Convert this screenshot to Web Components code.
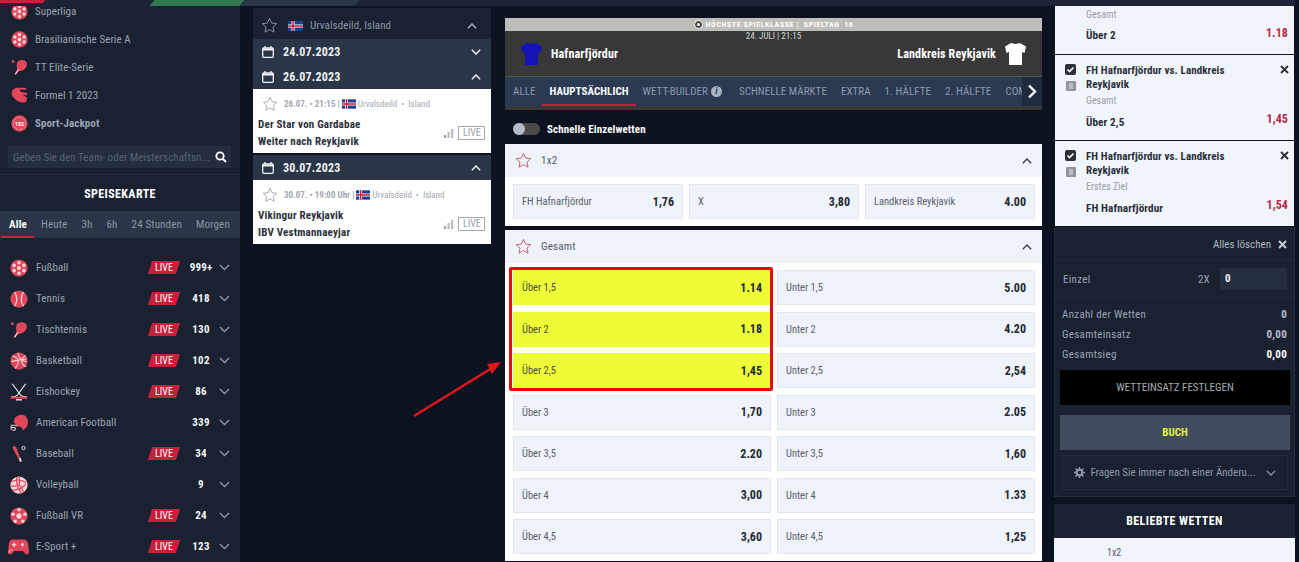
<!DOCTYPE html>
<html lang="de">
<head>
<meta charset="utf-8">
<title>Wetten</title>
<style>
  html, body { margin: 0; height: 562px; overflow: hidden; background: #0c1220; }
  body { font-family: Roboto, "Liberation Sans", sans-serif; font-stretch: 75%; font-size: 11px; color: #9aa3b2; }
</style>
</head>
<body>
<page-shell>
  <side-menu slot="left"></side-menu>

  <league-panel slot="mid" league="Urvalsdeild, Island">
    <date-row date="24.07.2023"></date-row>
    <date-row date="26.07.2023" open></date-row>
    <match-card meta="26.07. • 21:15 |" home="Der Star von Gardabae" away="Weiter nach Reykjavik"></match-card>
    <date-row date="30.07.2023" open style="margin-top:2px"></date-row>
    <match-card meta="30.07. • 19:00 Uhr |" home="Vikingur Reykjavik" away="IBV Vestmannaeyjar"></match-card>
  </league-panel>

  <div slot="center">
    <match-head></match-head>
    <market-tabs></market-tabs>
    <quick-toggle></quick-toggle>
    <market-panel title="1x2" cols="3">
      <odd-btn label="FH Hafnarfjördur" odd="1,76"></odd-btn>
      <odd-btn label="X" odd="3,80"></odd-btn>
      <odd-btn label="Landkreis Reykjavik" odd="4.00"></odd-btn>
    </market-panel>
    <market-panel title="Gesamt" cols="2" style="margin-top:4px">
      <odd-btn label="Über 1,5" odd="1.14" hot></odd-btn>
      <odd-btn label="Unter 1,5" odd="5.00"></odd-btn>
      <odd-btn label="Über 2" odd="1.18" hot></odd-btn>
      <odd-btn label="Unter 2" odd="4.20"></odd-btn>
      <odd-btn label="Über 2,5" odd="1,45" hot></odd-btn>
      <odd-btn label="Unter 2,5" odd="2,54"></odd-btn>
      <odd-btn label="Über 3" odd="1,70"></odd-btn>
      <odd-btn label="Unter 3" odd="2.05"></odd-btn>
      <odd-btn label="Über 3,5" odd="2.20"></odd-btn>
      <odd-btn label="Unter 3,5" odd="1,60"></odd-btn>
      <odd-btn label="Über 4" odd="3,00"></odd-btn>
      <odd-btn label="Unter 4" odd="1.33"></odd-btn>
      <odd-btn label="Über 4,5" odd="3,60"></odd-btn>
      <odd-btn label="Unter 4,5" odd="1,25"></odd-btn>
    </market-panel>
  </div>

  <div slot="right">
    <bet-card short sub="Gesamt" pick="Über 2" odd="1.18"></bet-card>
    <bet-card sub="Gesamt" pick="Über 2,5" odd="1,45"></bet-card>
    <bet-card sub="Erstes Ziel" pick="FH Hafnarfjördur" odd="1,54"></bet-card>
    <slip-footer></slip-footer>
    <popular-panel></popular-panel>
  </div>
</page-shell>

<script>
const RED = '#e0475b'

// all the sport icons, drawn on a 24x24 box
const ICONS = {
  football: `<circle cx="12" cy="12" r="11.5" fill="${RED}"/><g fill="#f7d5da"><circle cx="12" cy="12" r="2.7"/><circle cx="12" cy="5" r="2.4"/><circle cx="12" cy="19" r="2.4"/><circle cx="5.5" cy="8.5" r="2.4"/><circle cx="18.5" cy="8.5" r="2.4"/><circle cx="5.5" cy="15.5" r="2.4"/><circle cx="18.5" cy="15.5" r="2.4"/></g>`,
  tennis: `<circle cx="12" cy="12" r="11.5" fill="${RED}"/><path d="M6 2.5c4 5 4 14 0 19M18 2.5c-4 5-4 14 0 19" fill="none" stroke="#f7d5da" stroke-width="1.6"/>`,
  pingpong: `<path d="M9 4.5C12 .5 20 .5 22 5c2 4.5-2 11-8 11.5-2 .2-3 .5-4 1.5l-3 4.5-2-1.5 3-4.5c.5-1 1-2 .5-4C8.200 9.500 7.500 7 9 4.5z" fill="${RED}"/><path d="M10.500 15l-4.500 6.500" stroke="#f7d5da" stroke-width="1.5"/><circle cx="3" cy="3.500" r="2" fill="${RED}"/>`,
  basketball: `<circle cx="12" cy="12" r="11.5" fill="${RED}"/><path d="M3 5c5 1 8 5 8 8s-2 6-4 9M21 5c-4 2-6 5-5 9s3 5 6 5M2 13c4-2 12-2 20-4M11 1c-1 4 2 10 11 12" fill="none" stroke="#f7d5da" stroke-width="1.4"/>`,
  hockey: `<path d="M3 1l11 15M21 1L10 16" stroke="#e8ecf2" stroke-width="1.6" fill="none"/><path d="M14 16l3 2h5M10 16l-3 2H2" stroke="#e8ecf2" stroke-width="1.6" fill="none"/><rect x="1" y="18" width="22" height="3" fill="${RED}"/><rect x="8" y="21.500" width="8" height="1.8" fill="#e8ecf2"/>`,
  helmet: `<path d="M5 11C5 4 11 1 15.5 1 20.5 1 24 5.500 24 10.500c0 5-3 9-6.500 11-1.500-2.500-2-4-3.500-5H8V14c0-1.200-3-1.500-3-3z" fill="${RED}"/><path d="M9 15H1.5v6.500M1.500 18H7v3.500H3" fill="none" stroke="#f7d5da" stroke-width="1.3"/>`,
  bat: `<path d="M4 2c2-1.500 3.500-.5 4.500 1.500l5 13.500-2.500 1L4.500 6C3.800 4.500 3 3 4 2z" fill="${RED}"/><path d="M11.500 17.500l2.500-1 1.800 5-2.500 1z" fill="#f7d5da"/><circle cx="18" cy="4" r="2.2" fill="none" stroke="#f7d5da" stroke-width="1.3"/>`,
  volleyball: `<circle cx="12" cy="12" r="11.5" fill="#f7d5da"/><path d="M12 .5c1 4 1 8 0 11.500M12 12c-4 2-8 2-11 1M12 12c3 2 5 6 5.500 10M1.500 8c5-3 13-4 20 1M3 19c5 0 12-2 18.500-8M9 1.500c-1 6 1 15 6 21" fill="none" stroke="${RED}" stroke-width="1.7"/>`,
  vr: `<circle cx="12" cy="12" r="11.5" fill="${RED}"/><g fill="#f7d5da"><path d="M12 8l3.800 2.800-1.400 4.400H9.600l-1.400-4.400z"/><circle cx="12" cy="3.500" r="2.3"/><circle cx="4" cy="9.500" r="2.3"/><circle cx="20" cy="9.500" r="2.3"/><circle cx="7" cy="19" r="2.3"/><circle cx="17" cy="19" r="2.3"/></g>`,
  gamepad: `<path d="M6 4h12c3 0 4.500 2 5 5l1 9c.3 3-3 4-4.500 2l-2.500-3H7l-2.500 3C3 22 -.3 21 0 18l1-9c.5-3 2-5 5-5z" fill="${RED}"/><path d="M7 7.500v5M4.500 10h5M14.500 10h4M16.500 8v4" stroke="#fbe4e7" stroke-width="1.4"/><path d="M1 19c1-3 2-3 4-3" stroke="#fbe4e7" fill="none"/>`,
  f1: `<path d="M1 9c0-5 4-8 9-8h9c2 0 3 1.500 2.500 3L13 3.500c-1 2 1 4 3 4l7 1-1 3-6-.5 6 3.500c1 2 .5 4-1 6.500C17 22.500 11 22 7 18 4 15.500 1 13 1 9z" fill="${RED}"/>`,
  jackpot: `<circle cx="12" cy="12" r="11.5" fill="${RED}"/><circle cx="12" cy="12" r="8.5" fill="none" stroke="#f7d5da" stroke-width="1" stroke-dasharray="2 2"/><text x="12" y="15" font-family="Roboto, sans-serif" font-size="8" font-weight="700" fill="#fff" text-anchor="middle">1X2</text>`
}

const STAR = `<path d="M12 2l3 6.600 7.200.8-5.300 4.900 1.500 7.100L12 17.800l-6.400 3.600 1.500-7.100L1.800 9.400 9 8.600z" fill="none" stroke="currentColor" stroke-width="1.3" stroke-linejoin="round"/>`

class sportIcon extends HTMLElement {
  constructor() {
    super();
    const shadowRoot = this.attachShadow({mode: 'open'});
    let size = this.getAttribute('size') ? this.getAttribute('size') : 18
    let name = this.getAttribute('name')
    shadowRoot.innerHTML = `
      <style>
        :host{display:inline-flex;flex:none;line-height:0;}
      </style>
      <svg width="${size}" height="${size}" viewBox="0 0 24 24">${ICONS[name]}</svg>
    `;
  }
}

class chevIcon extends HTMLElement {
  constructor() {
    super();
    const shadowRoot = this.attachShadow({mode: 'open'});
    let up = this.hasAttribute('up')
    let w = this.getAttribute('w') ? this.getAttribute('w') : 12
    let sw = this.getAttribute('sw') ? this.getAttribute('sw') : 1.6
    shadowRoot.innerHTML = `
      <style>
        :host{display:inline-flex;flex:none;line-height:0;color:inherit;}
      </style>
      <svg width="${w}" height="${w * 0.6}" viewBox="0 0 12 7.2">
        <path d="${up ? 'M1 6.200L6 1.200l5 5' : 'M1 1l5 5 5-5'}" fill="none" stroke="currentColor" stroke-width="${sw}"/>
      </svg>
    `;
  }
}

class icelandFlag extends HTMLElement {
  constructor() {
    super();
    const shadowRoot = this.attachShadow({mode: 'open'});
    shadowRoot.innerHTML = `
      <style>:host{display:inline-flex;flex:none;line-height:0;}</style>
      <svg width="${this.getAttribute('w') || 15}" height="${this.getAttribute('h') || 10}" viewBox="0 0 15 10">
        <rect width="15" height="10" fill="#1b3f99"/>
        <path d="M5 0v10M0 5h15" stroke="#fff" stroke-width="3"/>
        <path d="M5 0v10M0 5h15" stroke="#d4152f" stroke-width="1.5"/>
      </svg>
    `;
  }
}

class pageShell extends HTMLElement {
  constructor() {
    super();
    const shadowRoot = this.attachShadow({mode: 'open'});
    shadowRoot.innerHTML = `
      <style>
        :host{display:block;position:relative;height:562px;overflow:hidden;}
        .cols{display:grid;grid-template-columns:240px 238px 538px 240px;column-gap:13px;align-items:start;}
        .c3{margin-top:18px;margin-left:1px;}
        .c4{margin-left:-1px;}
        .c2{margin-top:8px;}
        .top{position:absolute;left:0;top:0;width:1295px;height:6px;background:#1b2435;overflow:hidden;}
        .top i{position:absolute;top:0;height:6px;transform:skewX(-40deg);}
      </style>
      <div class="cols">
        <div><slot name="left"></slot></div>
        <div class="c2"><slot name="mid"></slot></div>
        <div class="c3"><slot name="center"></slot></div>
        <div class="c4"><slot name="right"></slot></div>
      </div>
      <div class="top">
        <i style="left:-10px;width:54px;height:3px;background:#c8203c"></i>
        <i style="left:152px;width:90px;background:#2f7a50"></i>
        <i style="left:242px;width:115px;background:#2b3648"></i>
      </div>
      <mark-box></mark-box>
    `;
  }
}

class sideMenu extends HTMLElement {
  constructor() {
    super();
    const shadowRoot = this.attachShadow({mode: 'open'});
    const links = [['football','Superliga'],['football','Brasilianische Serie A'],['pingpong','TT Elite-Serie'],['f1','Formel 1 2023'],['jackpot','Sport-Jackpot']]
    const sports = [['football','Fußball',1,'999+'],['tennis','Tennis',1,'418'],['pingpong','Tischtennis',1,'130'],['basketball','Basketball',1,'102'],['hockey','Eishockey',1,'86'],['helmet','American Football',0,'339'],['bat','Baseball',1,'34'],['volleyball','Volleyball',0,'9'],['vr','Fußball VR',1,'24'],['gamepad','E-Sport +',1,'123']]
    shadowRoot.innerHTML = `
      <style>
        :host{display:block;background:#1a2232;margin-top:-3px;height:570px;overflow:hidden;}
        .link{display:flex;align-items:center;gap:7px;height:28px;padding-left:11px;letter-spacing:.08px;}
        .link.b{font-weight:700;}
        .search{display:flex;align-items:center;justify-content:space-between;margin:9px 9px 6px 8px;height:22px;padding:0 5px;background:#252e3f;color:#596273;}
        .search span{letter-spacing:.06px;white-space:nowrap;}
        .search svg{flex:none;margin-right:-1px;}
        .title{border-top:1px solid #252e3f;height:36px;line-height:39px;text-align:center;color:#fff;font-weight:700;font-size:12px;letter-spacing:.4px;}
        .tabs{display:flex;gap:14px;align-items:stretch;height:27px;background:#2a3548;padding:0 0 0 9px;}
        .tabs span{display:flex;align-items:center;letter-spacing:.15px;color:#8b95a6;}
        .tabs span.on{color:#fff;font-weight:700;position:relative;}
        .tabs span.on::after{content:"";position:absolute;left:-8px;right:-7px;bottom:0;height:2px;background:#c8203c;}
        .rows{padding-top:14px;}
      </style>
      ${links.map((l, i) => `<div class="link ${i == 4 ? 'b' : ''}"><sport-icon name="${l[0]}" size="17"></sport-icon><span>${l[1]}</span></div>`).join('')}
      <div class="search">
        <span>Geben Sie den Team- oder Meisterschaftsn...</span>
        <svg width="12" height="12" viewBox="0 0 12 12"><circle cx="5" cy="5" r="3.7" fill="none" stroke="#fff" stroke-width="1.8"/><path d="M8 8l3 3" stroke="#fff" stroke-width="2"/></svg>
      </div>
      <div class="title">SPEISEKARTE</div>
      <div class="tabs">
        <span class="on">Alle</span><span>Heute</span><span>3h</span><span>6h</span><span>24 Stunden</span><span>Morgen</span>
      </div>
      <div class="rows">
        ${sports.map(s => `<sport-row icon="${s[0]}" label="${s[1]}" count="${s[3]}" ${s[2] ? 'live' : ''}></sport-row>`).join('')}
      </div>
    `;
  }
}

class sportRow extends HTMLElement {
  constructor() {
    super();
    const shadowRoot = this.attachShadow({mode: 'open'});
    let live = this.hasAttribute('live')
    let icon = this.getAttribute('icon')
    let size = icon == 'gamepad' ? 21 : 18
    shadowRoot.innerHTML = `
      <style>
        :host{display:grid;grid-template-columns:26px 112px 32px 42px 20px;align-items:center;height:31px;padding-left:10px;}
        .name{letter-spacing:.07px;white-space:nowrap;}
        .live{display:block;width:28px;margin-left:2px;height:13px;line-height:13px;background:#c8203c;transform:skewX(-18deg);text-align:center;}
        .live b{display:block;transform:skewX(18deg);color:#fff;font-weight:400;font-size:10px;}
        .num{color:#f2f4f8;font-weight:700;text-align:center;letter-spacing:.2px;}
        chev-icon{color:#8b95a6;justify-self:start;margin-left:-3px;}
        sport-icon{margin-left:${size == 21 ? -2 : 0}px;}
      </style>
      <sport-icon name="${icon}" size="${size}"></sport-icon>
      <span class="name">${this.getAttribute('label')}</span>
      <span>${live ? '<span class="live"><b>LIVE</b></span>' : ''}</span>
      <span class="num">${this.getAttribute('count')}</span>
      <chev-icon w="11" sw="1.5"></chev-icon>
    `;
  }
}

class leaguePanel extends HTMLElement {
  constructor() {
    super();
    const shadowRoot = this.attachShadow({mode: 'open'});
    shadowRoot.innerHTML = `
      <style>
        :host{display:block;}
        .head{display:flex;align-items:center;height:27px;padding:4px 14px 0 8px;background:#1a2232;color:#8b95a6;letter-spacing:.1px;}
        .head svg{width:17px;height:17px;color:#8b95a6;margin-right:10px;}
        .head span{margin-left:7px;flex:1;}
        chev-icon{color:#aab2bf;}
      </style>
      <div class="head">
        <svg viewBox="0 0 24 24">${STAR}</svg>
        <iceland-flag></iceland-flag>
        <span>${this.getAttribute('league')}</span>
        <chev-icon up w="10" sw="1.6"></chev-icon>
      </div>
      <slot></slot>
    `;
  }
}

class dateRow extends HTMLElement {
  constructor() {
    super();
    const shadowRoot = this.attachShadow({mode: 'open'});
    let open = this.hasAttribute('open')
    shadowRoot.innerHTML = `
      <style>
        :host{display:flex;align-items:center;height:25px;padding:0 10px 0 9px;background:#2a3548;color:#eef0f4;font-weight:700;font-size:12px;letter-spacing:.2px;}
        svg{margin-right:9px;}
        span{flex:1;}
      </style>
      <svg width="12" height="12" viewBox="0 0 12 12" fill="none" stroke="#eef0f4"><rect x=".7" y="2" width="10.6" height="9.3" rx="1" stroke-width="1.3"/><path d="M.7 3.500h10.6" stroke-width="2"/><path d="M3 0v2.500M9 0v2.500" stroke-width="1.3"/></svg>
      <span>${this.getAttribute('date')}</span>
      <chev-icon ${open ? 'up' : ''} w="10" sw="1.8"></chev-icon>
    `;
  }
}

class matchCard extends HTMLElement {
  constructor() {
    super();
    const shadowRoot = this.attachShadow({mode: 'open'});
    shadowRoot.innerHTML = `
      <style>
        :host{display:block;background:#fff;height:64px;box-sizing:border-box;padding:6px 6px 0 5px;color:#2a2f3a;}
        .meta{display:flex;align-items:center;height:18px;font-size:9px;color:#a2a7b0;white-space:nowrap;padding-left:4px;}
        .meta svg{width:16px;height:16px;color:#9ba1ab;margin-right:6px;}
        .meta b{margin-right:2px;}
        .meta iceland-flag{margin-right:2px;}
        .meta em{font-style:normal;margin:0 4px;}
        .body{display:flex;align-items:center;margin-top:3px;}
        .names{flex:1;font-weight:700;font-size:11px;line-height:17px;letter-spacing:.2px;}
        .live{border:1px solid #a2a7b0;color:#9ba1ab;font-size:10px;line-height:10px;padding:1px 4px;width:17px;text-align:center;}
        svg.sig{margin-right:4px;}
      </style>
      <div class="meta">
        <svg viewBox="0 0 24 24">${STAR}</svg>
        <b>${this.getAttribute('meta')}</b>
        <iceland-flag w="14" h="10"></iceland-flag>
        <span>Urvalsdeild</span><em>•</em><span>Island</span>
      </div>
      <div class="body">
        <div class="names"><div>${this.getAttribute('home')}</div><div>${this.getAttribute('away')}</div></div>
        <svg class="sig" width="10" height="10" viewBox="0 0 10 10" fill="#9ba1ab"><rect y="7" width="2.2" height="3"/><rect x="3.5" y="4" width="2.2" height="6" fill="#b8bdc5"/><rect x="7" y="1" width="2.2" height="9" fill="#b8bdc5"/></svg>
        <span class="live">LIVE</span>
      </div>
    `;
  }
}

class matchHead extends HTMLElement {
  constructor() {
    super();
    const shadowRoot = this.attachShadow({mode: 'open'});
    const shirt = c => `<svg width="23" height="24" viewBox="0 0 23 24"><path d="M7 1l4.500 1L16 1l6 3.500L20.500 11 18 10v13H5V10l-2.500 1L1 4.500z" fill="${c}"/></svg>`
    shadowRoot.innerHTML = `
      <style>
        :host{display:block;background:#383838;color:#fff;height:58px;overflow:hidden;}
        .league{display:flex;align-items:center;justify-content:center;gap:3px;height:13px;background:#bdbdb9;font-size:8px;font-weight:700;letter-spacing:.55px;}
        .date{height:11px;line-height:11px;text-align:center;font-size:9px;color:#d5d5d5;}
        .teams{display:flex;align-items:center;justify-content:space-between;height:24px;padding:0 15px;font-size:12px;font-weight:700;letter-spacing:.15px;}
        .team{display:flex;align-items:center;gap:8px;}
      </style>
      <div class="league">
        <svg width="9" height="9" viewBox="0 0 9 9"><circle cx="4.5" cy="4.5" r="4" fill="#444" stroke="#fff"/><circle cx="4.5" cy="4.5" r="1.5" fill="#fff"/></svg>
        <span>HÖCHSTE SPIELKLASSE | &nbsp;SPIELTAG &nbsp;16</span>
      </div>
      <div class="date">24. JULI | 21:15</div>
      <div class="teams">
        <div class="team">${shirt('#1414b4')}<span>Hafnarfjördur</span></div>
        <div class="team"><span>Landkreis Reykjavik</span>${shirt('#fff')}</div>
      </div>
    `;
  }
}

class marketTabs extends HTMLElement {
  constructor() {
    super();
    const shadowRoot = this.attachShadow({mode: 'open'});
    shadowRoot.innerHTML = `
      <style>
        :host{display:block;position:relative;background:#2a3a52;border-top:1px solid #555;border-bottom:4px solid #383838;height:29px;overflow:hidden;}
        .row{display:flex;gap:14px;height:29px;padding-left:8px;white-space:nowrap;letter-spacing:.05px;color:#8d99ac;font-size:11px;}
        span.t{display:flex;align-items:center;gap:3px;}
        span.on{color:#fff;font-weight:700;position:relative;}
        .on::after{content:"";position:absolute;left:-7px;right:-7px;bottom:0;height:2px;background:#c8203c;}
        .info{display:inline-block;width:11px;height:11px;border-radius:50%;background:#a8b2c1;color:#2a3a52;font-size:9px;line-height:11px;text-align:center;font-weight:700;letter-spacing:0;}
        .next{position:absolute;right:0;top:0;width:20px;height:29px;background:#1f2c40;color:#fff;display:flex;align-items:center;justify-content:center;}
      </style>
      <div class="row">
        <span class="t">ALLE</span><span class="t on">HAUPTSÄCHLICH</span>
        <span class="t" style="margin-right:3px">WETT-BUILDER<i class="info">i</i></span>
        <span class="t">SCHNELLE MÄRKTE</span><span class="t">EXTRA</span>
        <span class="t">1. HÄLFTE</span><span class="t">2. HÄLFTE</span><span class="t">COMBO</span>
      </div>
      <div class="next"><svg width="10" height="15" viewBox="0 0 10 15"><path d="M2 1.500l6 6-6 6" fill="none" stroke="#fff" stroke-width="2.4"/></svg></div>
    `;
  }
}

class quickToggle extends HTMLElement {
  constructor() {
    super();
    const shadowRoot = this.attachShadow({mode: 'open'});
    shadowRoot.innerHTML = `
      <style>
        :host{display:flex;align-items:center;gap:7px;height:30px;padding:4px 0 0 8px;color:#fff;font-weight:700;letter-spacing:.1px;}
        .sw{position:relative;width:27px;height:12px;border-radius:6px;background:#4a4a4a;}
        .sw::before{content:"";position:absolute;left:0;top:0;width:12px;height:12px;border-radius:50%;background:#b5bcc8;}
      </style>
      <span class="sw"></span><span>Schnelle Einzelwetten</span>
    `;
  }
}

class marketPanel extends HTMLElement {
  constructor() {
    super();
    const shadowRoot = this.attachShadow({mode: 'open'});
    let cols = this.getAttribute('cols')
    shadowRoot.innerHTML = `
      <style>
        :host{display:block;background:#fff;color:#555b66;}
        .head{display:flex;align-items:center;height:33px;padding:0 10px;background:#eef2f9;letter-spacing:.2px;}
        .head svg{width:17px;height:17px;color:#c2566c;margin-right:9px;}
        .head span{flex:1;}
        chev-icon{color:#3a3f4a;}
        .grid{display:grid;grid-template-columns:${cols == 3 ? '170px 170px 170px' : '258px 258px'};column-gap:6px;row-gap:6.5px;padding:7px 8px;}
      </style>
      <div class="head">
        <svg viewBox="0 0 24 24">${STAR}</svg>
        <span>${this.getAttribute('title')}</span>
        <chev-icon up w="10" sw="1.6"></chev-icon>
      </div>
      <div class="grid"><slot></slot></div>
    `;
  }
}

class oddBtn extends HTMLElement {
  constructor() {
    super();
    const shadowRoot = this.attachShadow({mode: 'open'});
    let hot = this.hasAttribute('hot')
    shadowRoot.innerHTML = `
      <style>
        :host{display:flex;align-items:center;justify-content:space-between;height:35px;box-sizing:border-box;padding:0 8px;background:${hot ? '#eefb37' : '#eef2f9'};border:1px solid ${hot ? '#eefb37' : '#e2e6ee'};font-size:10.5px;color:${hot ? '#4a4d35' : '#5b616c'};}
        b{font-size:12px;color:#252a35;}
      </style>
      <span>${this.getAttribute('label')}</span><b>${this.getAttribute('odd')}</b>
    `;
  }
}

class betCard extends HTMLElement {
  constructor() {
    super();
    const shadowRoot = this.attachShadow({mode: 'open'});
    // short: the card scrolled under the top bar, only its lower part shows
    let short = this.hasAttribute('short')
    shadowRoot.innerHTML = `
      <style>
        :host{display:grid;grid-template-columns:31px 1fr 14px;height:${short ? 54 : 85}px;margin:0 1px;border-bottom:1px solid #11151f;background:#f0f4fb;color:#2a2f3a;position:relative;}
        .marks{display:flex;flex-direction:column;align-items:center;gap:6px;padding:9px 0 0 10px;width:11px;}
        .txt{padding-top:${short ? 7 : 9}px;}
        .name{font-weight:700;font-size:11px;line-height:14px;letter-spacing:.1px;width:170px;}
        .sub{color:#9aa0aa;font-size:10px;line-height:16px;margin-top:${short ? 0 : 1}px;}
        .pick{font-weight:700;font-size:11.2px;margin-top:${short ? 6 : 7}px;letter-spacing:.1px;}
        .x{padding:10px 0 0;line-height:0;}
        .odd{position:absolute;right:6px;bottom:14px;color:#b82a47;font-weight:700;font-size:12px;letter-spacing:.1px;}
      </style>
      <div class="marks">
        ${short ? '' : `<svg width="11" height="11" viewBox="0 0 11 11"><rect width="11" height="11" rx="2" fill="#2a2f3a"/><path d="M2.500 5.500l2 2 4-4" stroke="#fff" stroke-width="1.6" fill="none"/></svg>
        <svg width="10" height="10" viewBox="0 0 10 10"><rect width="10" height="10" rx="1" fill="#8f949d"/><path d="M3 3h4M3 5h4M3 7h4" stroke="#dfe2e7"/></svg>`}
      </div>
      <div class="txt">
        ${short ? '' : `<div class="name">FH Hafnarfjördur vs. Landkreis Reykjavik</div>`}
        <div class="sub">${this.getAttribute('sub')}</div>
        <div class="pick">${this.getAttribute('pick')}</div>
        <div class="odd">${this.getAttribute('odd')}</div>
      </div>
      <div class="x">${short ? '' : `<svg width="9" height="9" viewBox="0 0 9 9"><path d="M1 1l7 7M8 1L1 8" stroke="#2a2f3a" stroke-width="1.8"/></svg>`}</div>
    `;
  }
}

class slipFooter extends HTMLElement {
  constructor() {
    super();
    const shadowRoot = this.attachShadow({mode: 'open'});
    shadowRoot.innerHTML = `
      <style>
        :host{display:block;height:270px;box-sizing:border-box;background:#1a2232;border:1px solid #252e3f;border-top:0;}
        .clear{display:flex;justify-content:flex-end;align-items:center;gap:7px;height:34px;padding:1px 7px 0;box-sizing:border-box;color:#b0b7c3;border-bottom:1px solid #222b3b;}
        .single{display:flex;align-items:center;height:36px;padding:0 7px 0 8px;border-bottom:1px solid #222b3b;letter-spacing:.3px;}
        .single span{flex:1;}
        .single em{font-style:normal;margin-right:10px;}
        .single b{display:block;box-sizing:border-box;width:67px;height:22px;line-height:22px;padding-left:5px;background:#252e3f;color:#f2f4f8;}
        .sum{padding:7px 7px 0 7px;height:65px;letter-spacing:.3px;}
        .sum div{display:flex;justify-content:space-between;height:20px;line-height:20px;}
        .sum b{color:#b8bfcb;}
        .sum div:last-child b{color:#fff;}
        .btn{margin:0 4px 0 5px;height:35px;line-height:35px;text-align:center;}
        .set{background:#000;color:#a8acb3;}
        .buy{background:#414c5e;color:#e2f13c;font-weight:700;margin-top:10px;}
        .ask{display:flex;align-items:center;justify-content:center;gap:5px;box-sizing:border-box;margin:5px 6px 0 7px;height:35px;border:1px solid #252e3f;color:#8f99a9;white-space:nowrap;}
        chev-icon{margin-left:5px;}
      </style>
      <div class="clear"><span>Alles löschen</span><svg width="9" height="9" viewBox="0 0 9 9"><path d="M1 1l7 7M8 1L1 8" stroke="#c5cad3" stroke-width="2"/></svg></div>
      <div class="single"><span>Einzel</span><em>2X</em><b>0</b></div>
      <div class="sum">
        <div><span>Anzahl der Wetten</span><b>0</b></div>
        <div><span>Gesamteinsatz</span><b>0,00</b></div>
        <div><span>Gesamtsieg</span><b>0,00</b></div>
      </div>
      <div class="btn set">WETTEINSATZ FESTLEGEN</div>
      <div class="btn buy">BUCH</div>
      <div class="ask">
        <svg width="11" height="11" viewBox="0 0 11 11"><circle cx="5.5" cy="5.5" r="2.8" fill="none" stroke="#8f99a9" stroke-width="2"/><path d="M5.500 0v2M5.500 9v2M0 5.500h2M9 5.500h2M1.600 1.600L3 3M8 8l1.400 1.400M1.600 9.400L3 8M8 3l1.400-1.400" stroke="#8f99a9" stroke-width="1.5"/></svg>
        <span>Fragen Sie immer nach einer Änderu...</span>
        <chev-icon w="10" sw="1.5"></chev-icon>
      </div>
    `;
  }
}

class popularPanel extends HTMLElement {
  constructor() {
    super();
    const shadowRoot = this.attachShadow({mode: 'open'});
    shadowRoot.innerHTML = `
      <style>
        :host{display:block;margin-top:7px;}
        .t{height:34px;line-height:34px;background:#1a2232;color:#fff;font-weight:700;font-size:12px;text-align:center;letter-spacing:.4px;}
        .b{height:40px;background:#f0f4fb;color:#555b66;padding:9px 0 0 53px;font-size:10px;box-sizing:border-box;}
      </style>
      <div class="t">BELIEBTE WETTEN</div>
      <div class="b">1x2</div>
    `;
  }
}

// red marking drawn over the screenshot: a box round the three picks and an arrow
class markBox extends HTMLElement {
  constructor() {
    super();
    const shadowRoot = this.attachShadow({mode: 'open'});
    shadowRoot.innerHTML = `
      <style>
        :host{position:absolute;left:0;top:0;width:1299px;height:562px;pointer-events:none;}
        .box{position:absolute;left:509px;top:267px;width:264px;height:124px;box-sizing:border-box;border:3px solid #e30c14;border-radius:2px;}
        svg{position:absolute;left:0;top:0;}
      </style>
      <div class="box"></div>
      <svg width="1299" height="562"><path d="M414 416L492 368" stroke="#e3161c" stroke-width="2.5"/><path d="M501 362L487 364 492 374z" fill="#e3161c"/></svg>
    `;
  }
}

customElements.define('sport-icon', sportIcon)
customElements.define('chev-icon', chevIcon)
customElements.define('iceland-flag', icelandFlag)
customElements.define('mark-box', markBox)
customElements.define('page-shell', pageShell)
customElements.define('side-menu', sideMenu)
customElements.define('sport-row', sportRow)
customElements.define('league-panel', leaguePanel)
customElements.define('date-row', dateRow)
customElements.define('match-card', matchCard)
customElements.define('match-head', matchHead)
customElements.define('market-tabs', marketTabs)
customElements.define('quick-toggle', quickToggle)
customElements.define('market-panel', marketPanel)
customElements.define('odd-btn', oddBtn)
customElements.define('bet-card', betCard)
customElements.define('slip-footer', slipFooter)
customElements.define('popular-panel', popularPanel)
</script>
</body>
</html>
